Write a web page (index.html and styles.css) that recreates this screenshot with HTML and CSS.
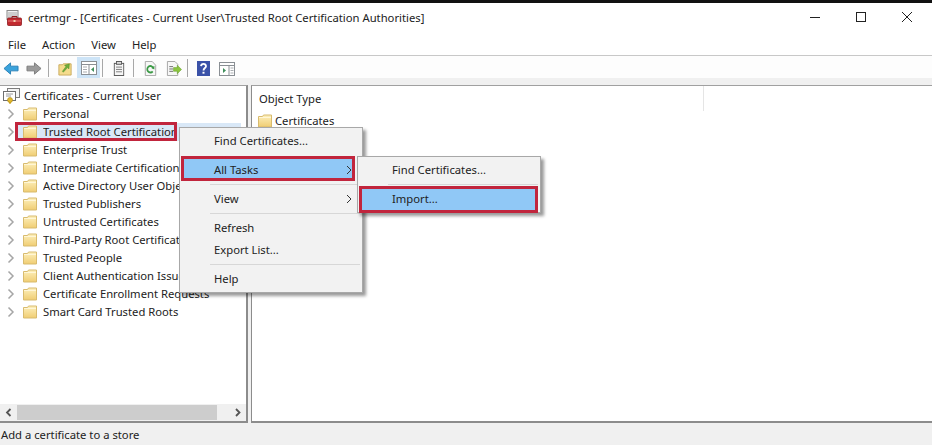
FILE: index.html
```html
<!DOCTYPE html>
<html lang="en">
<head>
<meta charset="utf-8">
<title>certmgr</title>
<link rel="stylesheet" href="styles.css">
</head>
<body>
<svg class="defs" width="0" height="0" aria-hidden="true">
  <defs>
    <linearGradient id="fy" x1="0" y1="0" x2="0" y2="1"><stop offset="0" stop-color="#fdf0bd"/><stop offset="1" stop-color="#f0cd72"/></linearGradient>
    <symbol id="folder" viewBox="0 0 14 14">
      <path d="M.5 2.500h4l1-1.500h8v12H.5z" fill="url(#fy)" stroke="#d8bb6e"/>
      <path d="M1 3.500h12" stroke="#fff6d6"/>
    </symbol>
    <symbol id="chev" viewBox="0 0 8 12"><path d="M1.500 1.500 6 6l-4.500 4.500" fill="none" stroke="#a6a6a6" stroke-width="1.500"/></symbol>
  </defs>
</svg>
<div class="app">
  <div class="topline"></div>
  <header class="titlebar">
    <svg class="appicon" width="16" height="16" viewBox="0 0 16 16">
      <rect x="1" y="0.500" width="11" height="9" fill="#f2f2f2" stroke="#8a8a8a"/>
      <path d="M2 3h9M2 5h9M2 7h9" stroke="#a9a9a9"/>
      <rect x="1.500" y="8" width="14" height="7.500" rx="1" fill="#c22a2e" stroke="#8e1a1e" stroke-width=".8"/>
      <path d="M6 8V6.500h5V8" fill="none" stroke="#8e1a1e"/>
      <path d="M2 11h13" stroke="#e7777a"/><rect x="7.500" y="10" width="2" height="2" fill="#f4d0b0"/>
    </svg>
    <span class="title">certmgr - [Certificates - Current User\Trusted Root Certification Authorities]</span>
    <div class="winbtns">
      <svg class="winbtn" width="46" height="28" viewBox="0 0 46 28"><path d="M18 14.500h10" stroke="#222"/></svg>
      <svg class="winbtn" width="46" height="28" viewBox="0 0 46 28"><rect x="18.500" y="9.500" width="9" height="9" fill="none" stroke="#222"/></svg>
      <svg class="winbtn" width="46" height="28" viewBox="0 0 46 28"><path d="M18 9l10 10M28 9 18 19" stroke="#222" fill="none"/></svg>
    </div>
  </header>
  <nav class="menubar">
    <span>File</span><span>Action</span><span>View</span><span>Help</span>
  </nav>
  <div class="toolbar">
    <svg class="tool" width="16" height="15" viewBox="0 0 17 16"><path d="M1 8 8 2v3.500h8v5H8V14z" fill="#3aa3dc" stroke="#2a7fb5"/></svg>
    <svg class="tool ml7" width="16" height="15" viewBox="0 0 17 16"><path d="M16 8 9 2v3.500H1v5h8V14z" fill="#9a9a9a" stroke="#7b7b7b"/></svg>
    <i class="sep ml6"></i>
    <svg class="tool ml9" width="14" height="15" viewBox="0 0 16 16" preserveAspectRatio="none"><path d="M1 4h4l1-1h9v12H1z" fill="#f5dc8d" stroke="#c9a95a"/><path d="M5 11 9 6 7.500 4.500 13 3l-.500 5.500L11 7l-5 5z" fill="#6fae3c" stroke="#4c8a25" stroke-width=".5"/></svg>
    <span class="toolon ml5"><svg width="16" height="14" viewBox="0 0 16 14"><rect x=".5" y=".5" width="15" height="13" fill="#fff" stroke="#8a8f94"/><path d="M.5 3.500h15M8 3.500v10" stroke="#8a8f94"/><path d="M2 6h4M2 8.500h4M2 11h4" stroke="#a9adb1"/><path d="M13 6v5L10 8.500z" fill="#3f8f5c"/></svg></span>
    <i class="sep ml2"></i>
    <svg class="tool ml10" width="12" height="15" viewBox="0 0 14 16" preserveAspectRatio="none"><rect x="1.500" y="2.500" width="11" height="13" fill="#f6f6f6" stroke="#555"/><rect x="4" y=".5" width="6" height="3" fill="#ddd" stroke="#555"/><path d="M3.500 6.500h7M3.500 9h7M3.500 11.500h7" stroke="#777"/></svg>
    <i class="sep ml8"></i>
    <svg class="tool ml10" width="13" height="15" viewBox="0 0 15 16" preserveAspectRatio="none"><path d="M1.500.5h8l4 4v11h-12z" fill="#f7f7f7" stroke="#a3a3a3"/><path d="M10.500 7.500A3.500 3.500 0 1 0 10 11" fill="none" stroke="#3b9a45" stroke-width="2"/><path d="M8.500 7.500 12 9V5z" fill="#3b9a45"/></svg>
    <svg class="tool ml9" width="16" height="15" viewBox="0 0 17 16" preserveAspectRatio="none"><path d="M1.500.5h8l3 3v12h-11z" fill="#f7f7f7" stroke="#a3a3a3"/><path d="M3.500 6h4M3.500 8.500h4M3.500 11h4" stroke="#666"/><path d="M8 7h4V4.500L16.500 9 12 13.500V11H8z" fill="#8cc63f" stroke="#5f9a22" stroke-width=".5"/></svg>
    <i class="sep ml5"></i>
    <svg class="tool ml9" width="13" height="15" viewBox="0 0 13 16" preserveAspectRatio="none"><rect width="13" height="16" fill="#3b52a8"/><path d="M4 5.500Q4.200 3 6.500 3T9 5.500C9 7.500 6.500 7.500 6.500 10" fill="none" stroke="#fff" stroke-width="1.800"/><rect x="5.500" y="11.500" width="2" height="2" fill="#fff"/></svg>
    <svg class="tool ml9" width="16" height="14" viewBox="0 0 16 14"><rect x=".5" y=".5" width="15" height="13" fill="#fff" stroke="#8a8f94"/><path d="M.5 3.500h15M10 3.500v10" stroke="#8a8f94"/><path d="M11.500 6h3M11.500 8.500h3M11.500 11h3" stroke="#a9adb1"/><path d="M4 6v5l3-2.500z" fill="#3f8f5c"/></svg>
  </div>
  <div class="band"></div>
  <main class="panes">
    <section class="left">
      <ul class="tree">
        <li class="root">
          <svg class="rooticon" width="17" height="16" viewBox="0 0 17 16"><rect x="4.500" y=".5" width="12" height="9" fill="#f4f4f4" stroke="#7d7d7d"/><rect x=".5" y="3.500" width="12" height="9" fill="#fff" stroke="#6f6f6f"/><path d="M3 6h7M3 8h5" stroke="#9a9a9a"/><circle cx="7" cy="12" r="2.500" fill="#e3b92d" stroke="#a88515" stroke-width=".6"/><path d="M6 14v2l1-.7 1 .7v-2" fill="#c9a11f"/></svg>
          Certificates - Current User
        </li>
        <li><svg class="chev" width="8" height="12"><use href="#chev"/></svg><svg class="fld" width="14" height="14"><use href="#folder"/></svg><span>Personal</span></li>
        <li class="selected"><svg class="chev" width="8" height="12"><use href="#chev"/></svg><svg class="fld" width="14" height="14"><use href="#folder"/></svg><span class="clip-sel">Trusted Root Certification Authorities</span></li>
        <li><svg class="chev" width="8" height="12"><use href="#chev"/></svg><svg class="fld" width="14" height="14"><use href="#folder"/></svg><span>Enterprise Trust</span></li>
        <li><svg class="chev" width="8" height="12"><use href="#chev"/></svg><svg class="fld" width="14" height="14"><use href="#folder"/></svg><span class="clip">Intermediate Certification Authorities</span></li>
        <li><svg class="chev" width="8" height="12"><use href="#chev"/></svg><svg class="fld" width="14" height="14"><use href="#folder"/></svg><span class="clip">Active Directory User Object</span></li>
        <li><svg class="chev" width="8" height="12"><use href="#chev"/></svg><svg class="fld" width="14" height="14"><use href="#folder"/></svg><span>Trusted Publishers</span></li>
        <li><svg class="chev" width="8" height="12"><use href="#chev"/></svg><svg class="fld" width="14" height="14"><use href="#folder"/></svg><span>Untrusted Certificates</span></li>
        <li><svg class="chev" width="8" height="12"><use href="#chev"/></svg><svg class="fld" width="14" height="14"><use href="#folder"/></svg><span class="clip">Third-Party Root Certification Authorities</span></li>
        <li><svg class="chev" width="8" height="12"><use href="#chev"/></svg><svg class="fld" width="14" height="14"><use href="#folder"/></svg><span>Trusted People</span></li>
        <li><svg class="chev" width="8" height="12"><use href="#chev"/></svg><svg class="fld" width="14" height="14"><use href="#folder"/></svg><span class="clip">Client Authentication Issuers</span></li>
        <li><svg class="chev" width="8" height="12"><use href="#chev"/></svg><svg class="fld" width="14" height="14"><use href="#folder"/></svg><span>Certificate Enrollment Requests</span></li>
        <li><svg class="chev" width="8" height="12"><use href="#chev"/></svg><svg class="fld" width="14" height="14"><use href="#folder"/></svg><span>Smart Card Trusted Roots</span></li>
      </ul>
      <div class="hscroll">
        <svg width="17" height="17" viewBox="0 0 17 17"><path d="M10.500 5 7 8.500l3.500 3.500" fill="none" stroke="#555" stroke-width="1.800"/></svg>
        <div class="thumb"></div>
        <svg width="17" height="17" viewBox="0 0 17 17"><path d="M7 5l3.500 3.500L7 12" fill="none" stroke="#555" stroke-width="1.800"/></svg>
      </div>
    </section>
    <section class="right">
      <div class="colhead"><span class="colname">Object Type</span></div>
      <div class="rowitem"><svg class="fld" width="14" height="14"><use href="#folder"/></svg>Certificates</div>
    </section>
  </main>
  <footer class="status">Add a certificate to a store</footer>

  <div class="ctx ctx-main">
    <div class="it"><span>Find Certificates...</span></div>
    <div class="gap"></div>
    <div class="it hl hl-tasks"><span>All Tasks</span><svg class="sub" width="6" height="10" viewBox="0 0 6 10"><path d="M1 1l4 4-4 4" fill="none" stroke="#333"/></svg></div>
    <div class="rule"></div>
    <div class="it"><span>View</span><svg class="sub" width="6" height="10" viewBox="0 0 6 10"><path d="M1 1l4 4-4 4" fill="none" stroke="#333"/></svg></div>
    <div class="rule"></div>
    <div class="it"><span>Refresh</span></div>
    <div class="it"><span>Export List...</span></div>
    <div class="rule"></div>
    <div class="it"><span>Help</span></div>
  </div>
  <div class="ctx ctx-sub">
    <div class="it"><span>Find Certificates...</span></div>
    <div class="rule"></div>
    <div class="it hl hl-import"><span>Import...</span></div>
  </div>
</div>
</body>
</html>
```
FILE: styles.css
```css
*, *::before, *::after { box-sizing: border-box; }
html, body { margin: 0; padding: 0; background: #fff; }
body { width: 935px; height: 445px; overflow: hidden; font: 11.25px/16px "Noto Sans", "Open Sans", sans-serif; color: #222; }
.defs { position: absolute; }
.app { position: relative; width: 932px; height: 445px; display: flex; flex-direction: column; background: #fff; }
.topline { height: 3px; background: #111; flex: none; }
.titlebar { height: 29px; flex: none; display: flex; align-items: center; padding-left: 6px; background: #fff; }
.appicon { flex: none; margin-right: 6px; }
.title { flex: 1; white-space: nowrap; }
.winbtns { display: flex; margin-right: 2px; align-self: flex-start; }
.winbtn { display: block; }
.menubar { height: 24px; flex: none; display: flex; align-items: center; gap: 16px; padding: 2px 0 0 8px; background: #fff; border-bottom: 1px solid #c8c8c8; }
.toolbar { height: 22px; flex: none; display: flex; align-items: center; padding: 1px 0 0 3px; background: #fdfdfd; }
.tool { flex: none; margin-top: 2px; }
.sep { width: 1px; height: 18px; margin-top: 1px; background: #a8a8a8; flex: none; }
.toolon { width: 23px; height: 21px; background: #cde4f7; display: flex; align-items: center; justify-content: center; flex: none; }
.ml2 { margin-left: 2px; }
.ml5 { margin-left: 5px; }
.ml6 { margin-left: 6px; }
.ml7 { margin-left: 7px; }
.ml8 { margin-left: 8px; }
.ml9 { margin-left: 9px; }
.ml10 { margin-left: 10px; }
.band { height: 7px; flex: none; background: #f0f0f0; }
.panes { flex: 1; min-height: 0; display: flex; background: #f0f0f0; }
.left { width: 248px; flex: none; display: flex; flex-direction: column; background: #fff; border-top: 1px solid #a0a0a0; border-right: 2px solid #8c8c8c; border-bottom: 2px solid #8c8c8c; }
.tree { flex: 1; min-height: 0; list-style: none; margin: 0; padding: 1px 0 0; }
.tree li { height: 18px; display: flex; align-items: center; padding-left: 7px; white-space: nowrap; position: relative; }
.tree li.root { padding-left: 3px; }
.rooticon { margin-right: 4px; flex: none; }
.chev { flex: none; margin-right: 8px; }
.fld { flex: none; margin-right: 6px; }
.clip { display: block; width: 136px; overflow: hidden; }
.clip-sel { display: block; width: 132px; overflow: hidden; }
.tree li.selected { background: linear-gradient(#d9e8f7, #d9e8f7) 15px 0 / 226px 100% no-repeat; }
.selected::after { content: ""; position: absolute; left: 15px; width: 162px; top: -1px; bottom: 0; border: 3px solid #c1253d; }
.hscroll { height: 17px; flex: none; display: flex; align-items: center; background: #f0f0f0; }
.hscroll svg { flex: none; }
.thumb { width: 200px; height: 15px; background: #cdcdcd; flex: none; }
.hscroll svg:last-child { margin-left: auto; }
.right { flex: 1; margin-left: 3px; background: #fff; border-top: 1px solid #a0a0a0; border-left: 1px solid #8c8c8c; border-bottom: 2px solid #8c8c8c; }
.colhead { height: 25px; display: flex; align-items: center; padding-left: 7px; }
.colname { width: 445px; height: 25px; line-height: 25px; border-right: 1px solid #e5e5e5; }
.rowitem { height: 18px; display: flex; align-items: center; padding-left: 6px; margin-top: 1px; }
.rowitem .fld { margin-right: 3px; }
.status { height: 22px; flex: none; display: flex; align-items: center; padding: 2px 0 0 1px; background: #f0f0f0; }
.ctx { position: absolute; background: #f2f2f2; border: 1px solid #a8a8a8; box-shadow: 3px 3px 3px rgba(0,0,0,.4); padding: 2px 0; }
.ctx-main { left: 179px; top: 127px; width: 184px; height: 166px; }
.ctx-sub { left: 357px; top: 156px; width: 184px; height: 57px; }
.it { height: 22px; display: flex; align-items: center; padding-left: 34px; position: relative; }
.it span { position: relative; z-index: 1; }
.sub { position: absolute; left: 166px; top: 6px; z-index: 1; }
.gap { height: 7px; }
.rule { height: 7px; position: relative; }
.rule::after { content: ""; position: absolute; left: 30px; right: 2px; top: 3px; height: 1px; background: #d7d7d7; }
.hl::before { content: ""; position: absolute; background: #90c8f6; border: 3px solid #c1253d; }
.hl-tasks::before { left: 1px; right: 7px; top: -3px; bottom: 0; }
.hl-import::before { left: 1px; right: 2px; top: -2px; bottom: -3px; }
```
